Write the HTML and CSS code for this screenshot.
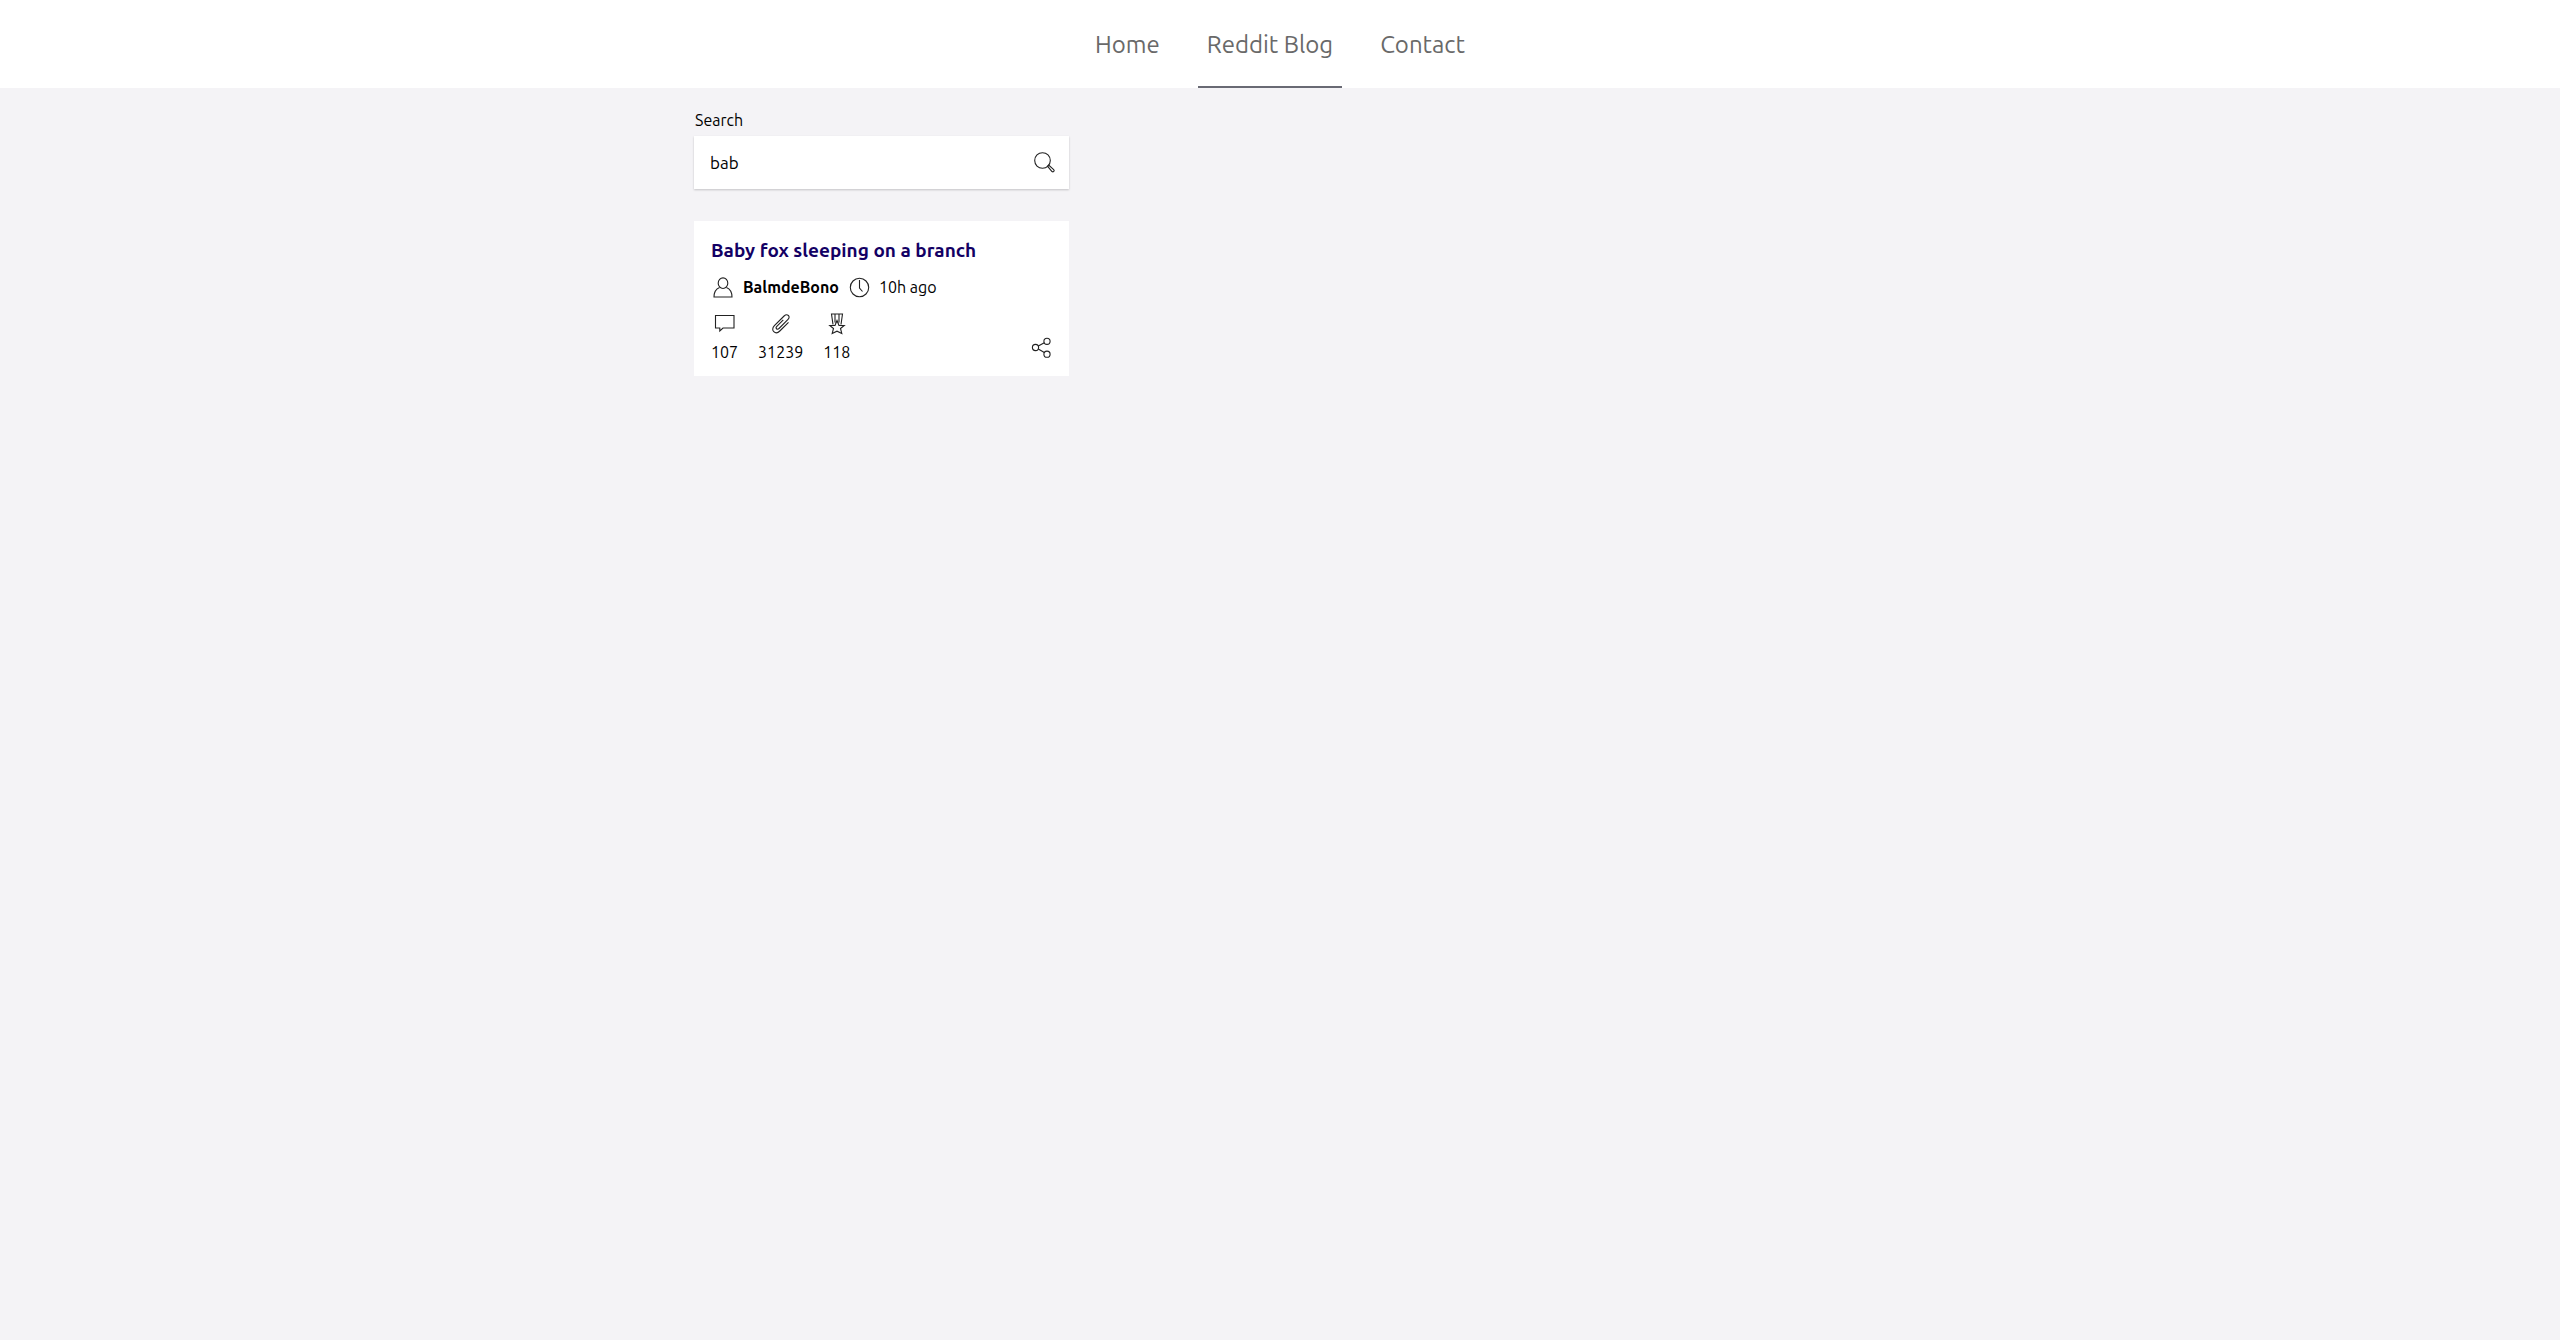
FILE: index.html
```html
<!DOCTYPE html>
<html lang="en">
<head>
<meta charset="utf-8">
<meta name="viewport" content="width=device-width, initial-scale=1">
<title>Reddit Blog</title>
<link rel="stylesheet" href="styles.css">
</head>
<body>
<header class="header">
  <nav class="nav">
    <a class="nav-link" href="#home">Home</a>
    <a class="nav-link active" href="#blog" aria-current="page">Reddit Blog</a>
    <a class="nav-link" href="#contact">Contact</a>
  </nav>
</header>
<main class="content">
  <form class="search">
    <label class="search-label" for="search">Search</label>
    <div class="search-box">
      <input class="search-input" id="search" type="text" value="bab">
      <button class="icon-button" type="button" aria-label="Search">
        <svg class="icon" viewBox="0 0 24 24"><circle cx="10.500" cy="9.500" r="7.800"/><path d="M15.500 15.200l1.200-1.200 5 4.600a1.200 1.200 0 0 1-1.700 1.900z"/></svg>
      </button>
    </div>
  </form>
  <article class="card">
    <h2 class="title"><a class="title-link" href="#post">Baby fox sleeping on a branch</a></h2>
    <div class="meta">
      <svg class="icon" viewBox="0 0 24 24"><ellipse cx="12" cy="8.200" rx="4.800" ry="5.300"/><path d="M8.600 12.500C5.200 13.900 3 17 3 22h18c0-5-2.200-8.100-5.600-9.500"/></svg>
      <strong class="author">BalmdeBono</strong>
      <svg class="icon" viewBox="0 0 24 24"><circle cx="12.500" cy="12.500" r="9.200"/><path d="M12.500 5v8l3 3.500"/></svg>
      <span>10h ago</span>
    </div>
    <div class="footer">
      <ul class="stats">
        <li class="stat">
          <svg class="icon" viewBox="0 0 24 24"><path d="M2.500 4.500h18.500v12.500H10l-3.200 3V17H2.500z"/></svg>
          <span>107</span>
        </li>
        <li class="stat">
          <svg class="icon" viewBox="0 0 24 24"><path d="M14.300 8.800l-6.500 6.500c-1.800 1.800.4 4 2.200 2.200l8.800-8.800c3.400-3.400-.6-6.600-3.700-3.700L5.400 14.700c-4.500 4.500 1.100 9.600 5.400 5.300l8.700-8.700"/></svg>
          <span>31239</span>
        </li>
        <li class="stat">
          <svg class="icon" viewBox="0 0 24 24"><path d="M8 13.500L6.500 3h11L16 13.500M10 11.500V3M14 11.500V3M12 9.500l2 5h5.200l-3.700 3 1.300 5-4.800-2.300-4.800 2.300 1.300-5-3.700-3H10z"/></svg>
          <span>118</span>
        </li>
      </ul>
      <button class="icon-button share" type="button" aria-label="Share">
        <svg class="icon" viewBox="0 0 24 24"><circle cx="6.500" cy="11.500" r="3.100"/><circle cx="18" cy="5.300" r="3.100"/><circle cx="18" cy="18.200" r="3.100"/><path d="M9.300 10.100l6-3.300M9.300 13l6 3.500"/></svg>
      </button>
    </div>
  </article>
</main>
</body>
</html>
```
FILE: styles.css
```css
* {
  box-sizing: border-box;
}

body {
  margin: 0;
  min-height: 100vh;
  background: #f4f3f6;
  color: #000;
  font: 16px/24px Ubuntu, "Noto Sans", sans-serif;
}

.header {
  background: #fff;
}

.nav {
  display: flex;
  justify-content: center;
  gap: 29px;
}

.nav-link {
  padding: 27px 9px 23px;
  border-bottom: 2px solid transparent;
  color: #696969;
  font-size: 24px;
  line-height: 36px;
  text-decoration: none;
}

.nav-link.active {
  border-bottom-color: #696a74;
}

.content {
  display: grid;
  grid-template-columns: repeat(3, 1fr);
  gap: 32px 24px;
  max-width: 1172px;
  margin: 0 auto;
  padding: 20px 0;
}

.search {
  grid-column: 1;
}

.search-label {
  display: block;
  margin-bottom: 4px;
  padding-left: 1px;
}

.search-box {
  display: flex;
  align-items: center;
  padding: 0 13px 0 16px;
  background: #fff;
  box-shadow: 0 1px 2px rgb(0 0 0 / 20%);
}

.search-input {
  flex: 1;
  min-width: 0;
  height: 53px;
  padding: 0;
  border: 0;
  outline: 0;
  background: transparent;
  color: #000;
  font: inherit;
  font-size: 17px;
}

.icon-button {
  display: flex;
  padding: 0;
  border: 0;
  background: none;
  color: #000;
}

.icon {
  width: 24px;
  height: 24px;
  fill: none;
  stroke: #222;
  stroke-width: 1.1;
}

.card {
  grid-column: 1;
  padding: 16px 16px 12px 17px;
  background: #fff;
}

.title {
  margin: 0 0 12px;
  font-size: 19px;
  line-height: 26px;
}

.title-link {
  color: #130064;
  text-decoration: none;
}

.meta {
  display: flex;
  align-items: center;
  gap: 8px;
  margin-bottom: 12px;
}

.footer {
  display: flex;
  align-items: flex-end;
  justify-content: space-between;
}

.share {
  margin-bottom: 4px;
}

.stats {
  display: flex;
  gap: 20px;
  margin: 0;
  padding: 0;
  list-style: none;
}

.stat {
  display: flex;
  flex-direction: column;
  align-items: center;
  gap: 5px;
}
```
